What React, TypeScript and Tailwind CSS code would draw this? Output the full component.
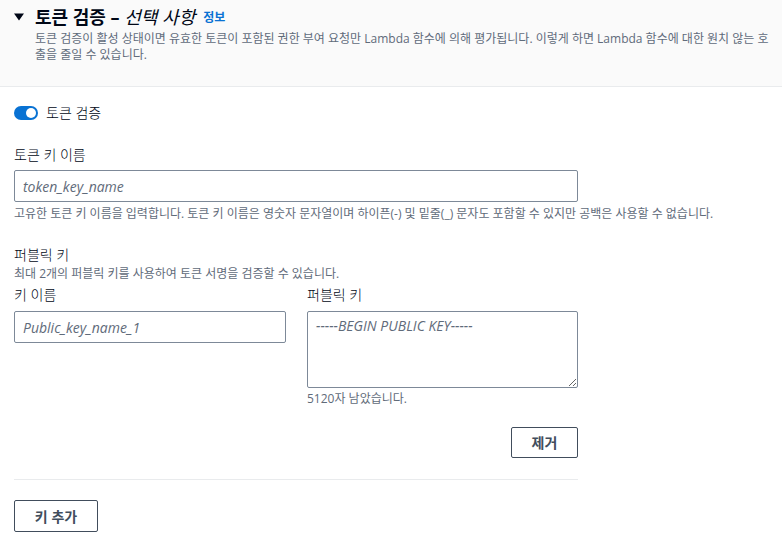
import React from "react";

const font = { fontFamily: '"Open Sans", "Noto Sans CJK KR", sans-serif' };

function Field({ label, children }: { label: string; children: React.ReactNode }) {
  return (
    <div className="flex flex-col">
      <label className="text-[14px] font-light leading-[22px] text-[#000716]">{label}</label>
      {children}
    </div>
  );
}

export default function App() {
  return (
    <div className="min-h-[547px] w-[782px] bg-white text-[#000716]" style={font}>
      <div className="border-b border-[#e9ebed] bg-[#fafafa] pb-[23px] pl-[13px] pr-[4px] pt-[6px]">
        <div className="flex items-center">
          <svg width="12" height="10" viewBox="0 0 12 10" className="mr-[10px]">
            <path d="M1 1.5h10L6 8.5z" fill="#000716" />
          </svg>
          <h2 className="text-[18px] font-bold leading-[22px]">
            토큰 검증 – <span className="font-normal italic">선택 사항</span>
          </h2>
          <a className="ml-[8px] mt-[2px] text-[12px] font-bold text-[#0972d3]">정보</a>
        </div>
        <p className="mt-[3px] break-all pl-[22px] text-[12px] leading-[16px] text-[#5f6b7a]">
          토큰 검증이 활성 상태이면 유효한 토큰이 포함된 권한 부여 요청만 Lambda 함수에 의해 평가됩니다. 이렇게 하면 Lambda 함수에 대한 원치 않는 호출을 줄일 수 있습니다.
        </p>
      </div>

      <div className="px-[14px] pt-[15px]">
        <div className="flex items-center gap-[8px]">
          <span className="flex h-[14px] w-[24px] items-center justify-end rounded-full bg-[#0972d3] pr-[2px]">
            <span className="h-[10px] w-[10px] rounded-full bg-white" />
          </span>
          <span className="text-[14px] font-light leading-[22px]">토큰 검증</span>
        </div>

        <div className="mt-[20px] w-[564px]">
          <Field label="토큰 키 이름">
            <input
              placeholder="token_key_name"
              className="mt-[4px] h-[32px] w-full rounded-[2px] border border-[#7d8998] px-[8px] text-[14px] italic placeholder:text-[#5f6b7a]"
            />
          </Field>
        </div>
        <p className="mt-[4px] text-[12px] leading-[16px] text-[#5f6b7a]">
          고유한 토큰 키 이름을 입력합니다. 토큰 키 이름은 영숫자 문자열이며 하이픈(-) 및 밑줄(_) 문자도 포함할 수 있지만 공백은 사용할 수 없습니다.
        </p>

        <div className="mt-[22px] w-[564px]">
          <div className="text-[14px] font-light leading-[22px]">퍼블릭 키</div>
          <div className="text-[12px] leading-[16px] text-[#5f6b7a]">최대 2개의 퍼블릭 키를 사용하여 토큰 서명을 검증할 수 있습니다.</div>

          <div className="mt-[2px] grid grid-cols-[272px_271px] gap-x-[21px]">
            <Field label="키 이름">
              <input
                placeholder="Public_key_name_1"
                className="mt-[5px] h-[32px] w-full rounded-[2px] border border-[#7d8998] px-[8px] text-[14px] italic placeholder:text-[#5f6b7a]"
              />
            </Field>
            <Field label="퍼블릭 키">
              <textarea
                placeholder="-----BEGIN PUBLIC KEY-----"
                className="mt-[5px] h-[77px] w-full rounded-[2px] border border-[#7d8998] px-[8px] py-[4px] text-[14px] italic leading-[20px] placeholder:text-[#5f6b7a]"
              />
              <span className="mt-[3px] text-[12px] leading-[16px] text-[#5f6b7a]">5120자 남았습니다.</span>
            </Field>
          </div>

          <div className="mt-[20px] flex justify-end">
            <button className="h-[31px] w-[67px] rounded-[2px] border border-[#414d5c] text-[14px] font-bold text-[#414d5c]">
              제거
            </button>
          </div>

          <div className="mt-[21px] border-t border-[#e9ebed]" />

          <button className="mt-[20px] h-[32px] w-[84px] rounded-[2px] border border-[#414d5c] text-[14px] font-bold text-[#414d5c]">
            키 추가
          </button>
        </div>
      </div>
    </div>
  );
}
